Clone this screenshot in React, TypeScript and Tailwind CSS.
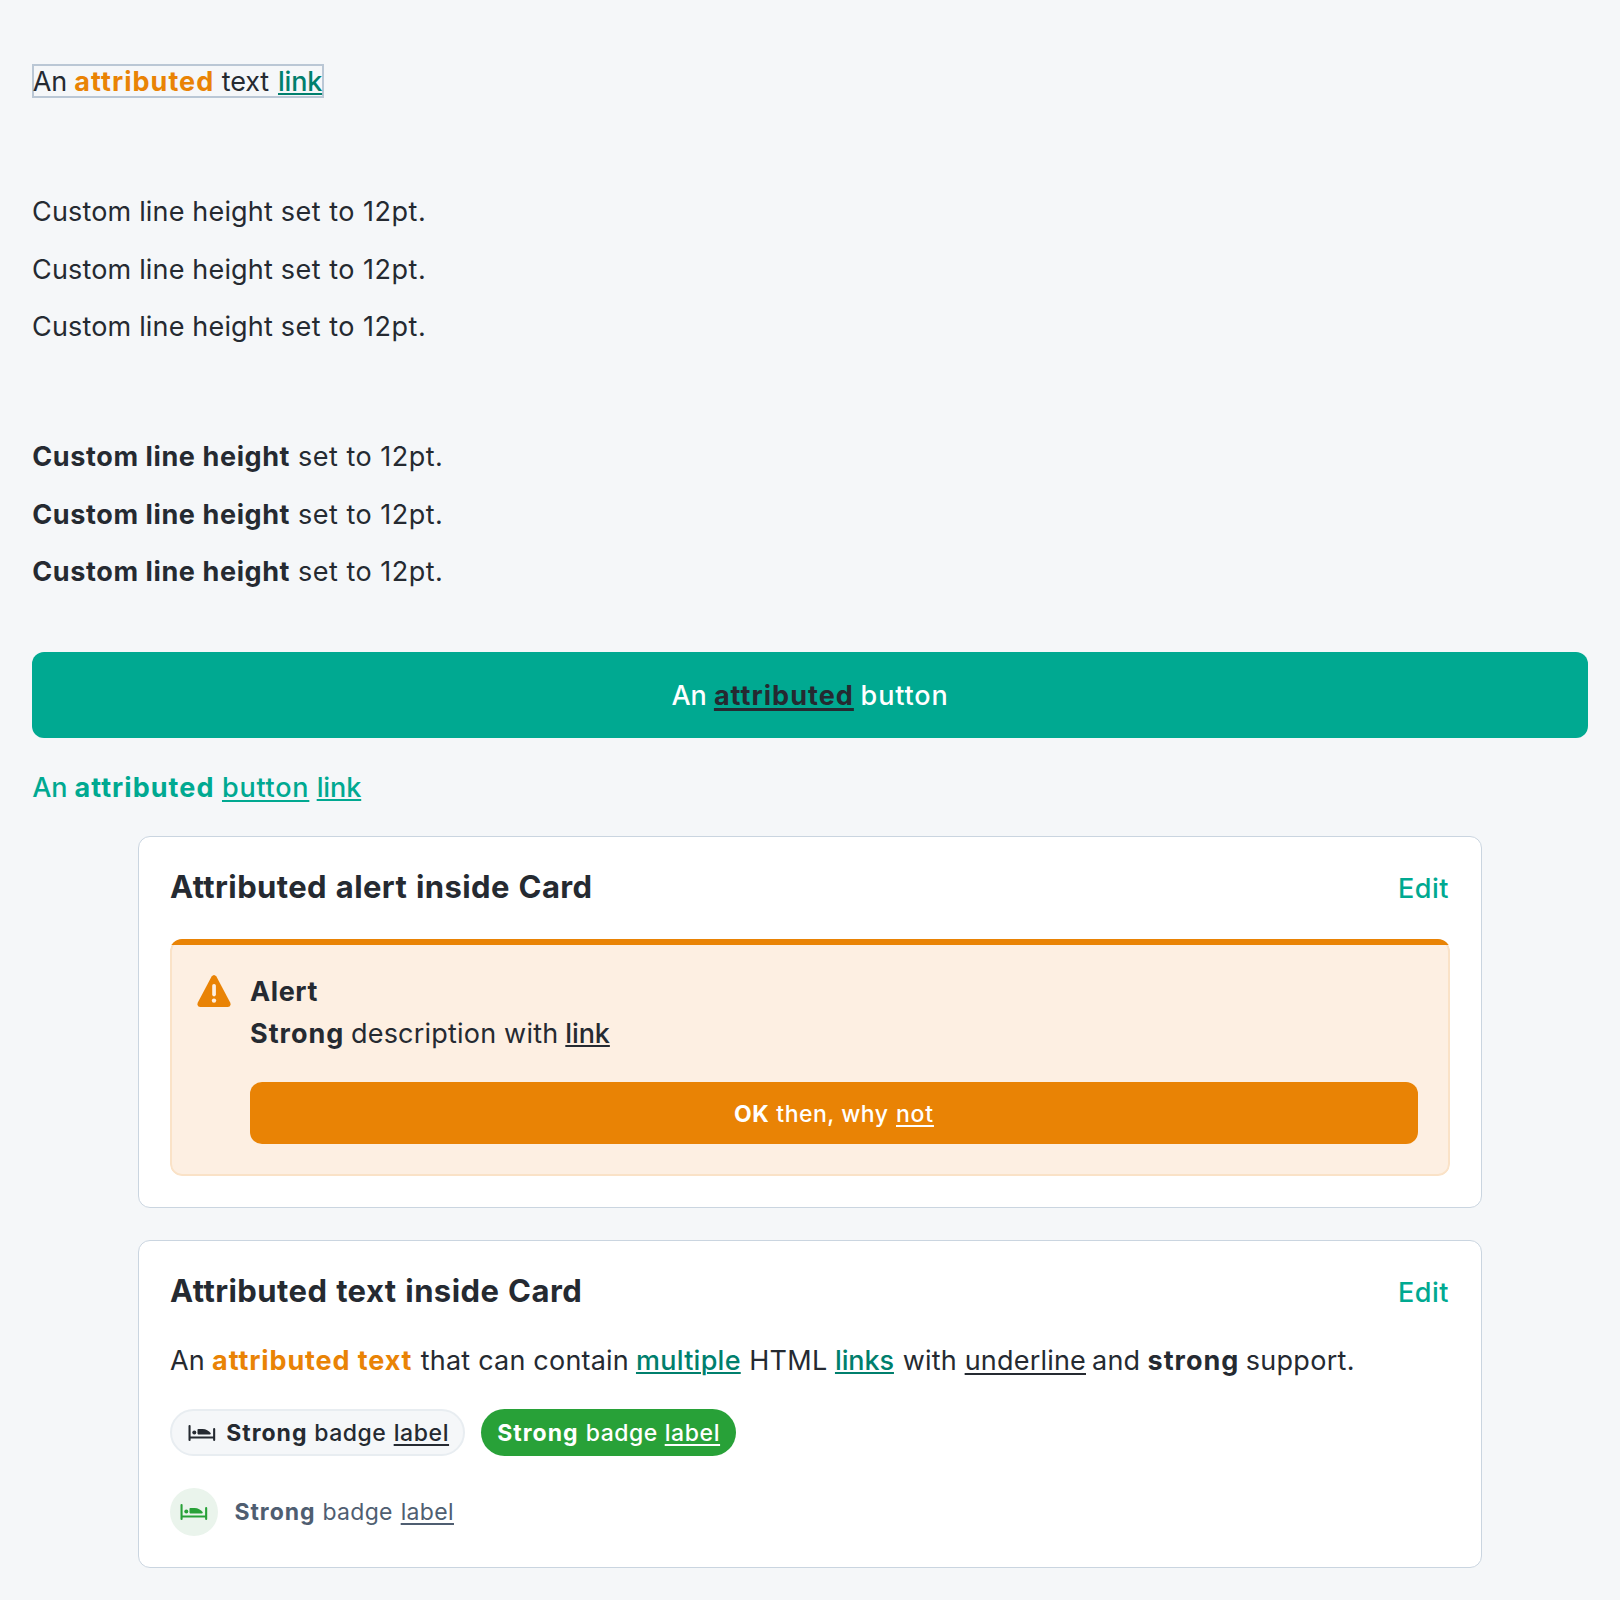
import type { ReactNode } from "react";

const underline = "underline decoration-2 underline-offset-2";
const underlineLow = "underline decoration-2 underline-offset-[3px]";

/** A run of text that reserves a fixed inline width, so following runs start on a steady column. */
function Run({ box = "", text = "", children }: { box?: string; text?: string; children: ReactNode }) {
  return (
    <span className={`inline-block shrink-0 text-left whitespace-pre ${box}`}>
      <span className={text}>{children}</span>
    </span>
  );
}

function BedIcon({ className }: { className: string }) {
  return (
    <svg viewBox="0 0 28 16" width="28" height="16" fill="currentColor" className={className} aria-hidden="true">
      <rect x="0.5" y="0" width="2.1" height="16" rx="1" />
      <rect x="25.1" y="3" width="2.1" height="13" rx="1" />
      <rect x="1" y="11.5" width="25.6" height="2" />
      <circle cx="6.3" cy="7.5" r="2" />
      <path d="M9.5 4.8Q9.5 4 10.3 4H14.6C18 4 20.8 5.8 22.6 8Q23.2 9.4 21.9 9.4H10.2Q9.5 9.4 9.5 8.6Z" />
    </svg>
  );
}

function AlertIcon() {
  return (
    <svg viewBox="0 0 34 32" width="34" height="32" className="mt-1 shrink-0" aria-hidden="true">
      <path
        d="M14.6 1.6Q17 -1.4 19.4 1.6L33.3 27.8Q34.4 31.6 31 32H3Q-0.4 31.6 0.7 27.8Z"
        fill="#e98305"
      />
      <rect x="15.2" y="9" width="3.7" height="12.4" rx="1.8" fill="#fdefe2" />
      <circle cx="17" cy="25.6" r="2.2" fill="#fdefe2" />
    </svg>
  );
}

function Card({ title, titleClass, children }: { title: string; titleClass: string; children: ReactNode }) {
  return (
    <section className="mx-auto w-[1344px] rounded-[12px] border border-[#cad5e0] bg-white px-[31px] pt-[33px] pb-[31px]">
      <header className="flex items-baseline justify-between">
        <h2 className={`text-[31px] leading-[33px] font-bold ${titleClass}`}>{title}</h2>
        <a className="mr-px text-[27px] leading-[27px] font-medium tracking-[0.5px] text-[#00a991]">Edit</a>
      </header>
      {children}
    </section>
  );
}

const lineSpacing = ["mb-px", "", ""];

export default function App() {
  return (
    <main className="flex min-h-[1600px] w-[1620px] flex-col bg-[#f5f7f9] px-8 pt-16 font-['Inter',sans-serif] text-[27px] text-[#252a31]">
      <div className="flex h-[34px] w-[292px] border-2 border-[#bac7d5] leading-[31px]">
        <Run box="-ml-[1.3px] w-[41.6px]">An</Run>
        <Run box="w-[147.4px]" text="font-bold tracking-[1.04px] text-[#e98305]">attributed</Run>
        <Run box="w-[56.3px]" text="tracking-[-0.1px]">text</Run>
        <Run text={`font-medium tracking-[-0.2px] text-[#007f6d] ${underline}`}>link</Run>
      </div>

      <div className="mt-[85px]">
        {lineSpacing.map((spacing, i) => (
          <p key={i} className={`flex leading-[57px] ${spacing}`}>
            <Run box="w-[248.8px]" text="tracking-[0.17px]">Custom line height</Run>
            <Run text="tracking-[0.5px]">set to 12pt.</Run>
          </p>
        ))}
      </div>

      <div className="mt-[73px]">
        {lineSpacing.map((spacing, i) => (
          <p key={i} className={`flex leading-[57px] ${spacing}`}>
            <Run box="ml-[0.3px] w-[265.7px]" text="font-bold tracking-[0.6px]">Custom line height</Run>
            <Run text="tracking-[0.5px]">set to 12pt.</Run>
          </p>
        ))}
      </div>

      <button className="mt-[52px] flex h-[86px] items-center justify-center rounded-[12px] bg-[#00a991] pt-px font-medium leading-[33px] text-white">
        <Run box="w-[42.5px]">An</Run>
        <Run
          box="w-[146.7px]"
          text="font-bold tracking-[1.04px] text-[#252a31] underline decoration-[3px] underline-offset-[3px]"
        >
          attributed
        </Run>
        <Run box="w-[88px]" text="tracking-[0.85px]">button</Run>
      </button>

      <p className="mt-[33px] flex font-medium leading-[33px] text-[#00a991]">
        <Run box="ml-[0.2px] w-[42.3px]">An</Run>
        <Run box="w-[147.5px]" text="font-bold tracking-[1.04px]">attributed</Run>
        <Run box="w-[94.7px]" text={`tracking-[0.75px] ${underlineLow}`}>button</Run>
        <Run text={`tracking-[-0.1px] ${underline}`}>link</Run>
      </p>

      <div className="mt-8 flex flex-col gap-8">
        <Card title="Attributed alert inside Card" titleClass="tracking-[0.4px] [word-spacing:1px]">
          <div className="relative mt-9 overflow-hidden rounded-[12px]">
            <div className="flex h-[237px] rounded-[12px] border-2 border-[#fae2c7] bg-[#fdefe2] pt-[30px] pr-[30px] pl-[25px]">
              <AlertIcon />
              <div className="ml-[19px] flex-1">
                <p className="leading-[41px] font-bold tracking-[0.6px]">Alert</p>
                <p className="flex leading-[43px]">
                  <Run box="w-[101px]" text="font-bold tracking-[1px]">Strong</Run>
                  <Run box="w-[214.3px]" text="tracking-[0.2px]">description with</Run>
                  <Run text={`font-medium tracking-[-0.1px] ${underline}`}>link</Run>
                </p>
                <button className="mt-[27px] flex h-[62px] w-full items-center justify-center rounded-[12px] bg-[#e98305] pt-0.5 text-[23px] font-medium leading-[30px] text-white">
                  <Run box="w-[42.3px]" text="font-bold tracking-[0.6px]">OK</Run>
                  <Run box="w-[119.7px]" text="tracking-[0.5px]">then, why</Run>
                  <Run box="w-[38px]" text={`tracking-[0.8px] ${underlineLow}`}>not</Run>
                </button>
              </div>
            </div>
            <div className="absolute inset-x-0 top-0 h-1.5 bg-[#e98305]" />
          </div>
        </Card>

        <Card title="Attributed text inside Card" titleClass="tracking-[0.43px] [word-spacing:1px]">
          <p className="mt-[29px] flex leading-[49px]">
            <Run box="w-[42.1px]">An</Run>
            <Run box="w-[208.7px]" text="font-bold tracking-[0.88px] text-[#e98305]">attributed text</Run>
            <Run box="w-[215.2px]" text="tracking-[0.2px]">that can contain</Run>
            <Run box="w-[113.2px]" text={`font-medium tracking-[0.25px] text-[#007f6d] ${underline}`}>multiple</Run>
            <Run box="w-[85.8px]" text="tracking-[0.3px]">HTML</Run>
            <Run box="w-[67.8px]" text={`font-medium tracking-[-0.1px] text-[#007f6d] ${underline}`}>links</Run>
            <Run box="w-[61.9px]" text="tracking-[0.2px]">with</Run>
            <Run box="w-[127.4px]" text={`tracking-[0.2px] ${underlineLow}`}>underline</Run>
            <Run box="w-[55.5px]" text="tracking-[0.2px]">and</Run>
            <Run box="w-[98.2px]" text="font-bold tracking-[1px]">strong</Run>
            <Run text="tracking-[0.3px]">support.</Run>
          </p>

          <div className="mt-6 flex gap-4 text-[23px] font-medium leading-[30px]">
            <div className="flex h-[47px] w-[295px] items-center rounded-full border-2 border-[#e8edf1] bg-[#f5f7f9] pt-px pl-4">
              <BedIcon className="mr-[10.2px] shrink-0" />
              <Run box="w-[88.1px]" text="font-bold tracking-[1px]">Strong</Run>
              <Run box="w-[79.4px]" text="tracking-[0.5px]">badge</Run>
              <Run text={`tracking-[0.6px] ${underlineLow}`}>label</Run>
            </div>
            <div className="flex h-[47px] w-[255px] items-center rounded-full bg-[#28a138] pt-px pl-[16.3px] text-white">
              <Run box="w-[88.4px]" text="font-bold tracking-[1px]">Strong</Run>
              <Run box="w-[79px]" text="tracking-[0.5px]">badge</Run>
              <Run text={`tracking-[0.6px] ${underlineLow}`}>label</Run>
            </div>
          </div>

          <div className="mt-8 flex items-center text-[23px] leading-[30px] text-[#4f5e71]">
            <div className="flex size-12 items-center justify-center rounded-full bg-[#eaf4ec] text-[#28a138]">
              <BedIcon className="shrink-0" />
            </div>
            <Run box="ml-[16.4px] w-[88.1px]" text="font-bold tracking-[1px]">Strong</Run>
            <Run box="w-[78.2px]" text="tracking-[0.3px]">badge</Run>
            <Run text={`tracking-[0.35px] ${underlineLow}`}>label</Run>
          </div>
        </Card>
      </div>
    </main>
  );
}
